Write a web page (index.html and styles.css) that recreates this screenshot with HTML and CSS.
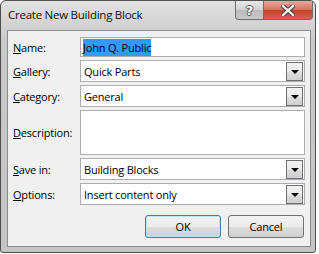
FILE: index.html
```html
<!DOCTYPE html>
<html lang="en">
<head>
  <meta charset="UTF-8">
  <title>Create New Building Block</title>
  <link rel="stylesheet" href="styles.css">
</head>
<body>
  <div class="window">
    <div class="titlebar">
      <span class="title">Create New Building Block</span>
      <div class="caption">
        <span class="cap-btn help">?</span>
        <span class="cap-btn close">
          <svg width="14" height="11" viewBox="0 0 14 11">
            <path d="M2 1 L12 10 M12 1 L2 10" stroke="#4a4a4a" stroke-width="4.5" stroke-linecap="square"/>
            <path d="M2 1 L12 10 M12 1 L2 10" stroke="#fff" stroke-width="2.2" stroke-linecap="square"/>
          </svg>
        </span>
      </div>
    </div>

    <div class="client">
      <div class="form">
        <label><u>N</u>ame:</label>
        <div class="field text"><span class="sel">John Q. Public</span></div>

        <label><u>G</u>allery:</label>
        <div class="field combo">Quick Parts<span class="drop"></span></div>

        <label><u>C</u>ategory:</label>
        <div class="field combo">General<span class="drop"></span></div>

        <label><u>D</u>escription:</label>
        <div class="field area"></div>

        <label><u>S</u>ave in:</label>
        <div class="field combo">Building Blocks<span class="drop"></span></div>

        <label><u>O</u>ptions:</label>
        <div class="field combo">Insert content only<span class="drop"></span></div>
      </div>

      <div class="buttons">
        <button class="btn default">OK</button>
        <button class="btn">Cancel</button>
      </div>
    </div>
  </div>
</body>
</html>
```

FILE: styles.css
```css
body {
  margin: 0;
  background: #fff;
  font-family: "Open Sans", "DejaVu Sans", sans-serif;
  font-size: 11px;
  letter-spacing: -0.2px;
  color: #000;
}
.window {
  width: 314px;
  height: 251px;
  border: 1px solid #4e4e4e;
  border-radius: 6px 6px 3px 3px;
  background: linear-gradient(#e2e2e2, #c9c9c9 40px, #c4c4c4);
  display: flex;
  flex-direction: column;
}
.titlebar {
  height: 29px;
  display: flex;
  justify-content: space-between;
  align-items: flex-start;
}
.title {
  margin: 6px 0 0 7px;
  font-size: 11.5px;
  letter-spacing: -0.25px;
  color: #111;
}
.caption {
  display: flex;
  margin-right: 2px;
}
.cap-btn {
  height: 18px;
  border: 1px solid #6d6d6d;
  border-top: none;
  display: flex;
  align-items: center;
  justify-content: center;
}
.help {
  width: 27px;
  border-radius: 0 0 0 4px;
  background: linear-gradient(#eaeaea, #d0d0d0 50%, #bcbcbc 51%, #c8c8c8);
  color: #fff;
  font-family: "DejaVu Sans", sans-serif;
  font-weight: bold;
  font-size: 13px;
  text-shadow: 1px 0 #555, -1px 0 #555, 0 1px #555, 0 -1px #555;
}
.close {
  width: 48px;
  border-left: none;
  border-radius: 0 0 4px 0;
  background: linear-gradient(#e9a99c, #d7705c 50%, #c4402a 51%, #d2654f);
}
.client {
  flex: 1;
  margin: 0 4px 5px 6px;
  border: 1px solid #8a8a8a;
  background: #f0f0f0;
  padding: 6px 5px 0 5px;
}
.form {
  display: grid;
  grid-template-columns: 67px 225px;
  row-gap: 3px;
  align-items: center;
}
.form label u {
  text-decoration-thickness: 1px;
}
.field {
  box-sizing: border-box;
  border: 1px solid #abadb3;
  background: #fff;
  display: flex;
  align-items: center;
  padding-left: 2px;
  position: relative;
}
.text {
  height: 20px;
}
.combo {
  height: 22px;
  padding-left: 3px;
}
.area {
  height: 45px;
}
.sel {
  background: #3399ff;
  color: #000;
  padding: 1px 0;
}
.drop {
  position: absolute;
  right: 1px;
  top: 1px;
  width: 15px;
  height: 17px;
  border: 1px solid #707070;
  background: linear-gradient(#f2f2f2, #ebebeb 50%, #dddddd 51%, #cfcfcf);
}
.drop::after {
  content: "";
  position: absolute;
  left: 4px;
  top: 7px;
  border-left: 4px solid transparent;
  border-right: 4px solid transparent;
  border-top: 4px solid #000;
}
.buttons {
  display: flex;
  justify-content: flex-end;
  gap: 7px;
  margin-top: 10px;
  padding-right: 1px;
}
.btn {
  width: 76px;
  height: 23px;
  border: 1px solid #707070;
  border-radius: 3px;
  background: linear-gradient(#f2f2f2, #ebebeb 50%, #dddddd 51%, #cfcfcf);
  font-family: inherit;
  font-size: 11px;
  letter-spacing: -0.2px;
  padding: 0;
}
.btn.default {
  border-color: #3c7fb1;
  box-shadow: inset 0 0 0 1px #b9e6fb;
}
```
